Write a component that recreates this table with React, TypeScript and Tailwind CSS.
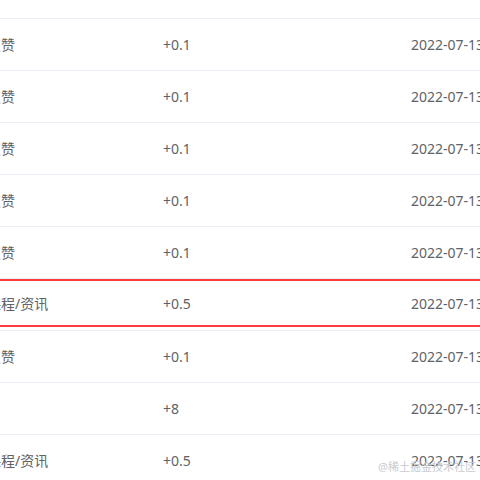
const rows = [
  { type: "点赞", score: "+0.1", date: "2022-07-13" },
  { type: "点赞", score: "+0.1", date: "2022-07-13" },
  { type: "点赞", score: "+0.1", date: "2022-07-13" },
  { type: "点赞", score: "+0.1", date: "2022-07-13" },
  { type: "点赞", score: "+0.1", date: "2022-07-13" },
  { type: "课程/资讯", score: "+0.5", date: "2022-07-13", active: true },
  { type: "点赞", score: "+0.1", date: "2022-07-13" },
  { type: "", score: "+8", date: "2022-07-13" },
  { type: "课程/资讯", score: "+0.5", date: "2022-07-13" },
]

function Cells({ r }: { r: (typeof rows)[number] }) {
  return (
    <div className="grid h-full grid-cols-[176px_248px_200px] items-center whitespace-nowrap">
      <span>{r.type}</span>
      <span>{r.score}</span>
      <span>{r.date}</span>
    </div>
  )
}

export default function App() {
  return (
    <div className="relative h-[480px] w-[480px] overflow-hidden bg-white font-['Noto_Sans','Noto_Sans_CJK_SC',sans-serif] text-[14px] text-[#606266]">
      <div className="-ml-[13px] w-[624px]">
        <div className="h-[19px] border-b border-[#ebeef5]" />
        {rows.map((r, i) => (
          <div key={i} className="h-[52px] border-b border-[#ebeef5]">
            {r.active ? (
              <div className="h-[48px] border-y-2 border-[#ff3b3b]">
                <Cells r={r} />
              </div>
            ) : (
              <Cells r={r} />
            )}
          </div>
        ))}
      </div>

      {/* watermark */}
      <div className="absolute bottom-[5px] right-[4px] text-[11px] text-[#c9cbd0]">@稀土掘金技术社区</div>
    </div>
  )
}
